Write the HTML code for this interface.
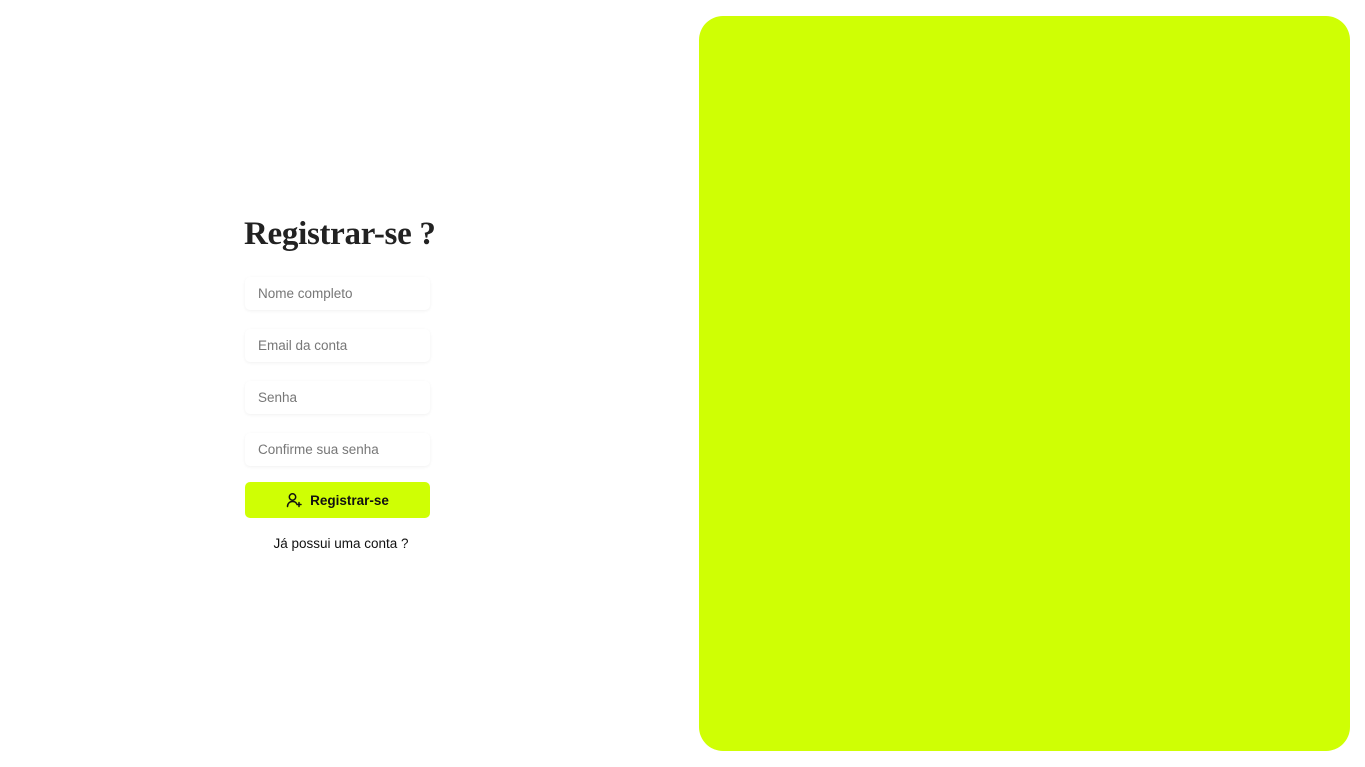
<!DOCTYPE html>
<html><head><style>
html,body{margin:0;padding:0;background:#fff;width:1365px;height:767px;overflow:hidden;font-family:"Liberation Sans",sans-serif}
.panel{position:absolute;left:699px;top:16px;width:651px;height:735px;background:#cfff04;border-radius:24px}
h1{position:absolute;left:244px;top:216px;margin:0;font-family:"Liberation Serif",serif;font-size:33px;font-weight:bold;color:#222;letter-spacing:-0.3px}
.in{position:absolute;left:245px;width:185px;height:33px;border-radius:5px;background:#fff;box-shadow:0 1px 3px rgba(0,0,0,0.06);font-size:13.5px;color:#777;line-height:33px;padding-left:13px;box-sizing:border-box}
.btn{position:absolute;left:245px;top:482px;width:185px;height:36px;border-radius:5px;background:#cfff04;display:flex;align-items:center;justify-content:center;font-size:13.5px;font-weight:bold;color:#111;gap:8px}
.link{position:absolute;left:245px;width:192px;top:536px;text-align:center;font-size:13.5px;color:#111}
</style></head><body>
<h1>Registrar-se ?</h1>
<div class="in" style="top:277px">Nome completo</div>
<div class="in" style="top:329px">Email da conta</div>
<div class="in" style="top:381px">Senha</div>
<div class="in" style="top:433px">Confirme sua senha</div>
<div class="btn"><svg width="16" height="16" viewBox="0 0 16 16" fill="none" stroke="#111" stroke-width="1.5" stroke-linecap="round"><circle cx="6.5" cy="5" r="3.2"/><path d="M1.5 14.5c0-3 2.2-5 5-5s3.5 1 4 2"/><path d="M13 10.5v4M11 12.5h4"/></svg>Registrar-se</div>
<div class="link">Já possui uma conta ?</div>
<div class="panel"></div>
</body></html>
